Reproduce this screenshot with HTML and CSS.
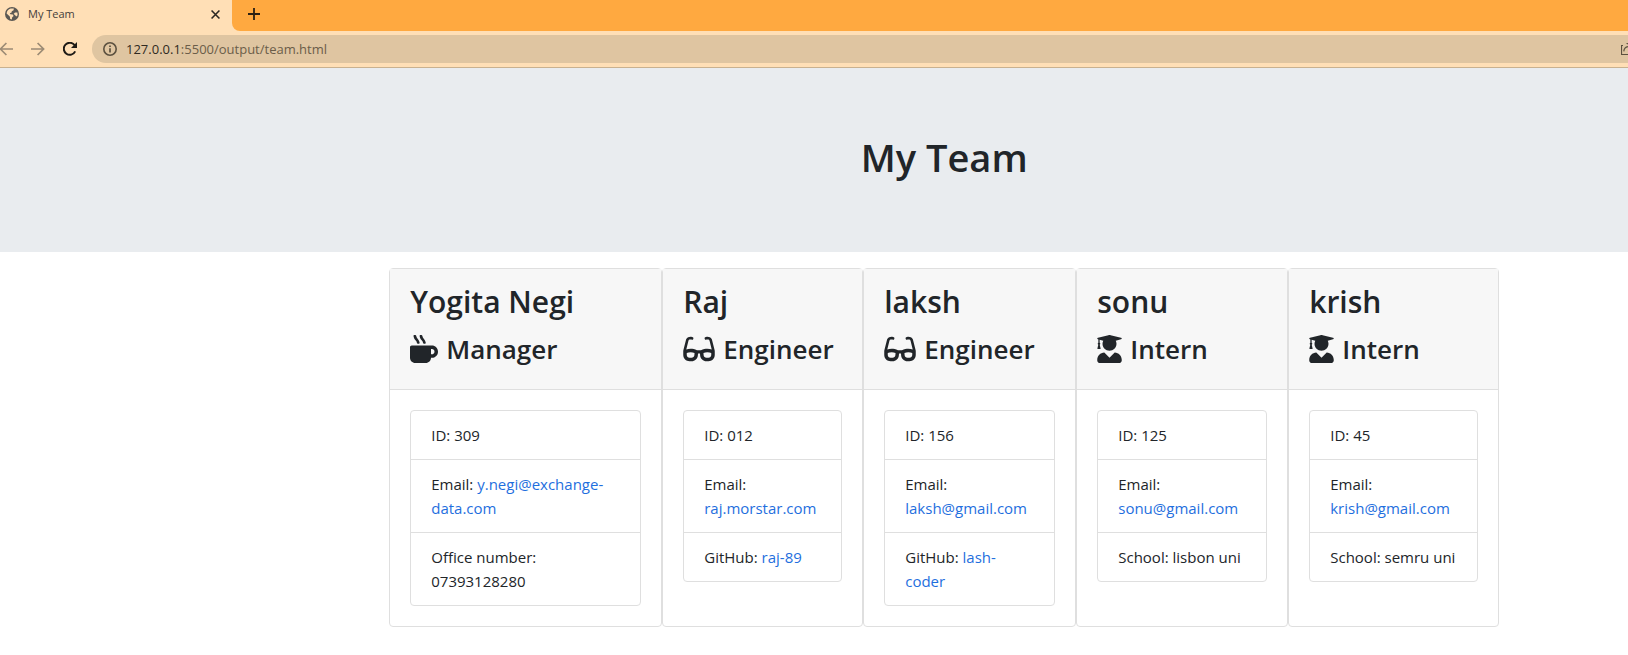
FILE: index.html
```html
<!DOCTYPE html>
<html lang="en">
<head>
<meta charset="utf-8">
<title>My Team</title>
<link rel="stylesheet" href="styles.css">
</head>
<body>
<svg class="defs" aria-hidden="true">
  <symbol id="mug" viewBox="0 0 512 512"><path d="M127.1 146.5c1.3 7.7 8 13.5 16 13.5h16.5c9.8 0 17.6-8.5 16.3-18-3.8-28.2-16.4-54.2-36.6-74.7-14.4-14.7-23.6-33.3-26.4-53.5C111.8 5.9 105 0 96.8 0H80.4C70.6 0 63 8.5 64.1 18c3.9 31.9 18 61.3 40.6 84.4 12 12.2 19.7 27.5 22.4 44.1zm112 0c1.3 7.7 8 13.5 16 13.5h16.5c9.8 0 17.6-8.5 16.3-18-3.8-28.2-16.4-54.2-36.6-74.7-14.4-14.7-23.6-33.3-26.4-53.5C223.8 5.9 217 0 208.8 0h-16.4c-9.8 0-17.5 8.5-16.3 18 3.9 31.9 18 61.3 40.6 84.4 12 12.2 19.7 27.5 22.4 44.1zM400 192H32c-17.7 0-32 14.3-32 32v192c0 53 43 96 96 96h192c53 0 96-43 96-96h16c61.8 0 112-50.2 112-112s-50.2-112-112-112zm0 160h-16v-96h16c26.5 0 48 21.5 48 48s-21.5 48-48 48z"/></symbol>
  <symbol id="glasses" viewBox="0 0 576 512"><path d="M574.1 280.37L528.75 98.66c-5.91-23.7-21.59-44.05-43-55.81-21.44-11.73-46.97-14.11-70.19-6.33l-15.25 5.08c-8.39 2.79-12.92 11.86-10.12 20.24l5.06 15.18c2.79 8.38 11.85 12.91 20.23 10.12l13.18-4.39c10.87-3.62 23-3.57 33.16 1.73 10.29 5.37 17.57 14.56 20.37 25.82l38.46 153.82c-22.19-6.81-49.79-12.46-81.2-12.46-34.77 0-73.98 7.02-114.85 26.74h-73.18c-40.87-19.74-80.08-26.75-114.86-26.75-31.42 0-59.02 5.65-81.21 12.46l38.46-153.83c2.79-11.25 10.09-20.45 20.38-25.81 10.16-5.3 22.28-5.35 33.15-1.73l13.17 4.39c8.38 2.79 17.44-1.74 20.23-10.12l5.06-15.18c2.8-8.38-1.73-17.45-10.12-20.24l-15.25-5.08c-23.22-7.78-48.75-5.41-70.19 6.33-21.41 11.77-37.09 32.11-43 55.8L1.9 280.37A64.218 64.218 0 0 0 0 295.86v70.25C0 429.01 51.58 480 115.2 480h37.12c60.28 0 110.37-45.94 114.88-105.37l2.93-38.63h35.75l2.93 38.63C313.31 434.06 363.4 480 423.68 480h37.12c63.62 0 115.2-50.99 115.2-113.88v-70.25c0-5.23-.64-10.43-1.9-15.5zm-370.72 89.42c-1.97 25.91-24.4 46.21-51.06 46.21H115.2C86.97 416 64 393.62 64 366.11v-37.54c18.12-6.49 43.42-12.92 72.58-12.92 23.86 0 47.26 4.33 69.93 12.92l-3.13 41.22zM512 366.12c0 27.51-22.97 49.88-51.2 49.88h-37.12c-26.67 0-49.1-20.3-51.06-46.21l-3.13-41.22c22.67-8.59 46.08-12.92 69.95-12.92 29.12 0 54.43 6.44 72.55 12.93v37.54z"/></symbol>
  <symbol id="graduate" viewBox="0 0 448 512"><path d="M319.4 320.6L224 416l-95.4-95.4C57.1 323.7 0 382.2 0 454.4v9.6c0 26.5 21.5 48 48 48h352c26.5 0 48-21.5 48-48v-9.6c0-72.2-57.1-130.7-128.6-133.8zM13.6 79.8l6.4 1.5v58.4c-7 4.2-12 11.5-12 20.3 0 8.4 4.6 15.4 11.1 19.7L3.5 242c-1.7 6.9 2.1 14 7.6 14h41.8c5.5 0 9.3-7.1 7.6-14l-15.6-62.3C51.4 175.4 56 168.4 56 160c0-8.8-5-16.1-12-20.3V87.1l66 15.9c-8.6 17.2-14 36.4-14 57 0 70.7 57.3 128 128 128s128-57.3 128-128c0-20.6-5.3-39.8-14-57l96.3-23.2c18.2-4.4 18.2-27.1 0-31.5l-190.4-46c-13-3.1-26.7-3.1-39.7 0L13.6 48.2c-18.1 4.4-18.1 27.2 0 31.6z"/></symbol>
</svg>

<div class="browser">
  <div class="tabstrip">
    <div class="tab">
      <svg class="favicon" viewBox="0 0 14 14" aria-hidden="true"><circle cx="7" cy="7" r="7" fill="#5b5853"/><path d="M5.6 1.6 8.8 1.4 8.6 3.2 6.8 4.2 6.6 5.6 4.8 6.2 5.4 7.2 7.8 7.4 8.6 9 7.2 10.2 6.8 12.4 5.2 12 4.8 9.6 1.6 6.6C1.8 4.2 3.4 2.2 5.6 1.6zM10 5.4l2.4.2.2 2.6-1.4 1.4-1.2-1.6-1.4-1z" fill="#ffdfb6"/></svg>
      <span class="tab-title">My Team</span>
      <button class="tab-close" type="button" aria-label="Close tab"><svg width="9" height="9" viewBox="0 0 8 8"><path d="M.5.5l7 7M7.5.5l-7 7" stroke="#2b2722" stroke-width="1.4"/></svg></button>
    </div>
    <button class="new-tab" type="button" aria-label="New tab"><svg width="12" height="12" viewBox="0 0 12 12"><path d="M6 0v12M0 6h12" stroke="#2b2013" stroke-width="1.8"/></svg></button>
  </div>
  <div class="toolbar">
    <button class="nav" type="button" aria-label="Back"><svg width="14" height="14" viewBox="0 0 14 14"><path d="M14 7H1.4M7.4 1L1.4 7l6 6" fill="none" stroke="#9c8b75" stroke-width="1.7"/></svg></button>
    <button class="nav" type="button" aria-label="Forward"><svg width="14" height="14" viewBox="0 0 14 14"><path d="M0 7h12.6M6.6 1l6 6-6 6" fill="none" stroke="#9c8b75" stroke-width="1.7"/></svg></button>
    <button class="nav" type="button" aria-label="Reload"><svg width="14" height="14" viewBox="0 0 14 14"><path d="M12.2 9.4A6 6 0 1 1 11.6 3.2" fill="none" stroke="#1f1b16" stroke-width="2"/><path d="M14 0v6H8z" fill="#1f1b16"/></svg></button>
    <div class="address">
      <svg width="14" height="14" viewBox="0 0 14 14" aria-hidden="true"><circle cx="7" cy="7" r="6.2" fill="none" stroke="#5c5140" stroke-width="1.6"/><path d="M7 6.2v4.2M7 3.4v1.6" stroke="#5c5140" stroke-width="1.7"/></svg>
      <span class="url"><span class="host">127.0.0.1</span>:5500/output/team.html</span>
      <svg class="share" width="7" height="12" viewBox="0 0 7 12" aria-hidden="true"><path d="M2 2.5H.5v9H7M2.8 8.4C3 5.6 4.4 4 7 3.6M7 1L5.6 0" fill="none" stroke="#5c5140" stroke-width="1.2"/></svg>
    </div>
  </div>
</div>

<header class="banner"><h1>My Team</h1></header>

<main class="page">
  <div class="cards">
    <section class="card">
      <div class="card-header"><h2>Yogita Negi</h2><h3><svg class="icon"><use href="#mug"/></svg>Manager</h3></div>
      <div class="card-body"><ul class="list">
        <li>ID: 309</li>
        <li>Email: <a href="mailto:y.negi@exchange-data.com">y.negi@exchange-<wbr>data.com</a></li>
        <li>Office number: 07393128280</li>
      </ul></div>
    </section>
    <section class="card">
      <div class="card-header"><h2>Raj</h2><h3><svg class="icon icon-wide"><use href="#glasses"/></svg>Engineer</h3></div>
      <div class="card-body"><ul class="list">
        <li>ID: 012</li>
        <li>Email: <a href="mailto:raj.morstar.com">raj.morstar.com</a></li>
        <li>GitHub: <a href="https://github.com/raj-89">raj-89</a></li>
      </ul></div>
    </section>
    <section class="card">
      <div class="card-header"><h2>laksh</h2><h3><svg class="icon icon-wide"><use href="#glasses"/></svg>Engineer</h3></div>
      <div class="card-body"><ul class="list">
        <li>ID: 156</li>
        <li>Email: <a href="mailto:laksh@gmail.com">laksh@gmail.com</a></li>
        <li>GitHub: <a href="https://github.com/lash-coder">lash-<wbr>coder</a></li>
      </ul></div>
    </section>
    <section class="card">
      <div class="card-header"><h2>sonu</h2><h3><svg class="icon icon-narrow"><use href="#graduate"/></svg>Intern</h3></div>
      <div class="card-body"><ul class="list">
        <li>ID: 125</li>
        <li>Email: <a href="mailto:sonu@gmail.com">sonu@gmail.com</a></li>
        <li>School: lisbon uni</li>
      </ul></div>
    </section>
    <section class="card">
      <div class="card-header"><h2>krish</h2><h3><svg class="icon icon-narrow"><use href="#graduate"/></svg>Intern</h3></div>
      <div class="card-body"><ul class="list">
        <li>ID: 45</li>
        <li>Email: <a href="mailto:krish@gmail.com">krish@gmail.com</a></li>
        <li>School: semru uni</li>
      </ul></div>
    </section>
  </div>
</main>
</body>
</html>
```
FILE: styles.css
```css
* { box-sizing: border-box; }

body {
  margin: 0;
  background: #fff;
  color: #212529;
  font: 15px/24px "Open Sans", "Noto Sans", sans-serif;
}

h1, h2, h3, ul { margin: 0; padding: 0; }
h1, h2, h3 { font-weight: 600; }

button {
  display: flex;
  padding: 0;
  border: 0;
  background: none;
}

.defs { display: none; }

/* Browser chrome */
.browser { border-bottom: 1px solid #c9b18f; }

.tabstrip {
  display: flex;
  align-items: center;
  height: 31px;
  background: #ffdfb6;
}

.tab {
  display: flex;
  align-items: center;
  width: 232px;
  padding: 0 12px 3px 5px;
}

.favicon { width: 14px; height: 14px; }

.tab-title {
  flex: 1;
  margin-left: 9px;
  font-size: 11px;
  line-height: 16px;
  color: #45403a;
}

.new-tab {
  align-self: stretch;
  flex: 1;
  align-items: center;
  padding: 0 0 3px 16px;
  border-bottom-left-radius: 8px;
  background: #ffa940;
}

.toolbar {
  display: flex;
  align-items: center;
  height: 36px;
  padding-bottom: 1px;
  background: #ffdfb6;
}

.nav { margin-right: 18px; }
.nav:first-child { margin-left: -1px; }
.nav:nth-child(3) { margin-right: 15px; }

.address {
  display: flex;
  flex: 1;
  align-items: center;
  height: 28px;
  padding-left: 11px;
  border-radius: 14px 0 0 14px;
  background: #dfc5a1;
}

.url {
  flex: 1;
  margin-left: 9px;
  font-size: 13px;
  line-height: 20px;
  color: #6b5d49;
}

.host { color: #2f2a22; }

/* Page */
.banner {
  padding: 64px 0 70px 16%;
  background: #e9ecef;
  text-align: center;
}

.banner h1 { font-size: 38px; line-height: 50px; }

.page { padding: 16px 0 28px 16%; }

.cards {
  display: grid;
  grid-template-columns: 273fr 201fr 213fr 212fr 211fr;
  max-width: 1110px;
  margin: 0 auto;
}

.card {
  min-width: 0;
  border: 1px solid #dfdfdf;
  border-radius: 4px;
}

.card-header {
  padding: 12px 20px;
  border-bottom: 1px solid #dfdfdf;
  background: #f7f7f7;
}

.card-header h2 {
  margin-bottom: 8px;
  font-size: 30px;
  line-height: 42px;
}

.card-header h3 {
  display: flex;
  align-items: center;
  gap: 8px;
  margin-bottom: 10px;
  font-size: 26px;
  line-height: 36px;
}

.icon {
  flex: none;
  width: 28px;
  height: 28px;
  fill: currentColor;
}

.icon-wide { width: 32px; }
.icon-narrow { width: 25px; }

.card-body { padding: 20px; }

.list {
  border: 1px solid #dfdfdf;
  border-radius: 4px;
  list-style: none;
}

.list li { padding: 12px 20px; }
.list li + li { border-top: 1px solid #dfdfdf; }

a { color: #1f6fde; text-decoration: none; }
```
